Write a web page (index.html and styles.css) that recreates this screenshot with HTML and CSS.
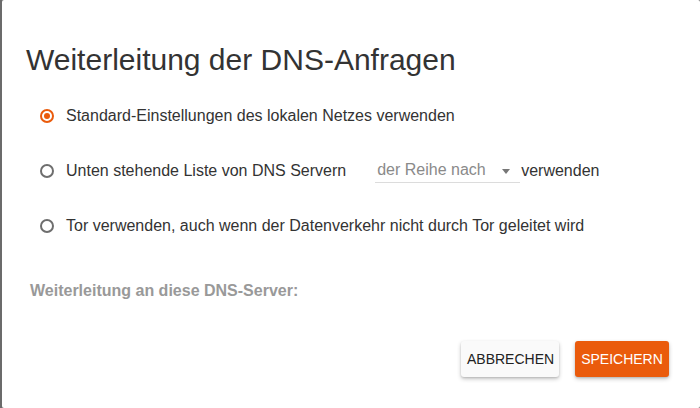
FILE: index.html
```html
<!DOCTYPE html>
<html lang="de">
<head>
<meta charset="utf-8">
<title>DNS</title>
<link rel="stylesheet" href="styles.css">
</head>
<body>
<div class="dialog">
  <h1 class="title">Weiterleitung der DNS-Anfragen</h1>
  <div class="options">
    <label class="row">
      <span class="radio checked"></span>
      <span class="label">Standard-Einstellungen des lokalen Netzes verwenden</span>
    </label>
    <label class="row">
      <span class="radio"></span>
      <span class="label">Unten stehende Liste von DNS Servern</span>
      <span class="select">
        <span class="select-text">der Reihe nach:</span>
        <span class="caret"></span>
      </span>
      <span class="label after">verwenden</span>
    </label>
    <label class="row">
      <span class="radio"></span>
      <span class="label">Tor verwenden, auch wenn der Datenverkehr nicht durch Tor geleitet wird</span>
    </label>
  </div>
  <div class="sublabel">Weiterleitung an diese DNS-Server:</div>
  <div class="actions">
    <button class="btn btn-plain">ABBRECHEN</button>
    <button class="btn btn-primary">SPEICHERN</button>
  </div>
</div>
</body>
</html>
```
FILE: styles.css
```css
html, body {
  margin: 0;
  padding: 0;
  height: 100%;
}
body {
  background: #6b6b6b;
  font-family: "Liberation Sans", Arial, sans-serif;
  overflow: hidden;
}
.dialog {
  margin-left: 2px;
  height: 408px;
  background: #ffffff;
  border-radius: 2px;
  box-sizing: border-box;
  padding: 42px 31px 0 24px;
  display: flex;
  flex-direction: column;
}
.title {
  margin: 0;
  font-weight: normal;
  font-size: 30px;
  line-height: 36px;
  color: #333333;
}
.options {
  margin-top: 10px;
  display: flex;
  flex-direction: column;
}
.row {
  height: 55px;
  display: flex;
  align-items: center;
  padding-left: 14px;
  font-size: 16px;
  color: #333333;
}
.radio {
  width: 14px;
  height: 14px;
  box-sizing: border-box;
  border: 2px solid #6e6e6e;
  border-radius: 50%;
  flex: none;
  margin-right: 12px;
  display: flex;
  align-items: center;
  justify-content: center;
}
.radio.checked {
  border-color: #ea5b0c;
}
.radio.checked::after {
  content: "";
  width: 6px;
  height: 6px;
  border-radius: 50%;
  background: #ea5b0c;
}
.label {
  line-height: 20px;
  white-space: nowrap;
}
.select {
  margin-left: 29px;
  width: 145px;
  height: 25px;
  box-sizing: border-box;
  border-bottom: 1px solid #dcdcdc;
  display: flex;
  align-items: center;
  padding-left: 2px;
  color: #8a8a8a;
}
.select-text {
  width: 109px;
  overflow: hidden;
  white-space: nowrap;
  line-height: 20px;
}
.caret {
  margin-left: 16px;
  margin-top: 2px;
  width: 0;
  height: 0;
  border-left: 4px solid transparent;
  border-right: 4px solid transparent;
  border-top: 5px solid #777777;
}
.after {
  margin-left: 1px;
}
.sublabel {
  margin-top: 28px;
  padding-left: 4px;
  font-size: 16px;
  line-height: 20px;
  font-weight: bold;
  color: #999999;
}
.actions {
  margin-top: 40px;
  display: flex;
  justify-content: flex-end;
  gap: 16px;
}
.btn {
  height: 36px;
  border: none;
  border-radius: 3px;
  font-family: "Liberation Sans", Arial, sans-serif;
  font-size: 14px;
  padding: 0 6px;
  box-shadow: 0 2px 4px rgba(0,0,0,0.22), 0 1px 2px rgba(0,0,0,0.12);
}
.btn-plain {
  width: 98px;
  background: #fafafa;
  color: #222222;
}
.btn-primary {
  width: 94px;
  background: #ea5b0c;
  color: #ffffff;
}
```
